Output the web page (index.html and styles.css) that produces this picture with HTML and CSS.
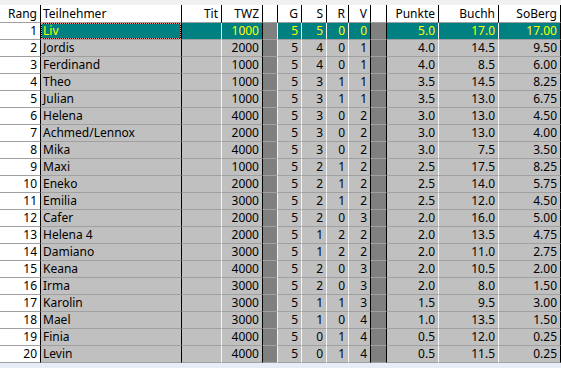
FILE: index.html
```html
<!DOCTYPE html>
<html>
<head>
<meta charset="utf-8">
<link rel="stylesheet" href="styles.css">
</head>
<body>
<div class="top"></div>
<div class="grid">
  <div class="row head">
    <div class="cell bk">Rang</div><div class="cell bk name">Teilnehmer</div><div class="cell bk">Tit</div><div class="cell bk">TWZ</div><div class="cell bk"></div><div class="cell bk">G</div><div class="cell bk">S</div><div class="cell bk">R</div><div class="cell bk">V</div><div class="cell bk"></div><div class="cell bk">Punkte</div><div class="cell bk">Buchh</div><div class="cell bk">SoBerg</div>
  </div>
  <div class="row sel">
    <div class="cell rank bk">1</div><div class="cell name bk"><span class="focus">Liv</span></div><div class="cell"></div><div class="cell bk">1000</div><div class="cell dark"></div><div class="cell">5</div><div class="cell">5</div><div class="cell">0</div><div class="cell bk">0</div><div class="cell dark bk"></div><div class="cell">5.0</div><div class="cell">17.0</div><div class="cell bk">17.00</div>
  </div>
  <div class="row">
    <div class="cell rank bk">2</div><div class="cell name bk">Jordis</div><div class="cell"></div><div class="cell bk">2000</div><div class="cell dark"></div><div class="cell">5</div><div class="cell">4</div><div class="cell">0</div><div class="cell bk">1</div><div class="cell dark bk"></div><div class="cell">4.0</div><div class="cell">14.5</div><div class="cell bk">9.50</div>
  </div>
  <div class="row">
    <div class="cell rank bk">3</div><div class="cell name bk">Ferdinand</div><div class="cell"></div><div class="cell bk">1000</div><div class="cell dark"></div><div class="cell">5</div><div class="cell">4</div><div class="cell">0</div><div class="cell bk">1</div><div class="cell dark bk"></div><div class="cell">4.0</div><div class="cell">8.5</div><div class="cell bk">6.00</div>
  </div>
  <div class="row">
    <div class="cell rank bk">4</div><div class="cell name bk">Theo</div><div class="cell"></div><div class="cell bk">1000</div><div class="cell dark"></div><div class="cell">5</div><div class="cell">3</div><div class="cell">1</div><div class="cell bk">1</div><div class="cell dark bk"></div><div class="cell">3.5</div><div class="cell">14.5</div><div class="cell bk">8.25</div>
  </div>
  <div class="row">
    <div class="cell rank bk">5</div><div class="cell name bk">Julian</div><div class="cell"></div><div class="cell bk">1000</div><div class="cell dark"></div><div class="cell">5</div><div class="cell">3</div><div class="cell">1</div><div class="cell bk">1</div><div class="cell dark bk"></div><div class="cell">3.5</div><div class="cell">13.0</div><div class="cell bk">6.75</div>
  </div>
  <div class="row">
    <div class="cell rank bk">6</div><div class="cell name bk">Helena</div><div class="cell"></div><div class="cell bk">4000</div><div class="cell dark"></div><div class="cell">5</div><div class="cell">3</div><div class="cell">0</div><div class="cell bk">2</div><div class="cell dark bk"></div><div class="cell">3.0</div><div class="cell">13.0</div><div class="cell bk">4.50</div>
  </div>
  <div class="row">
    <div class="cell rank bk">7</div><div class="cell name bk">Achmed/Lennox</div><div class="cell"></div><div class="cell bk">2000</div><div class="cell dark"></div><div class="cell">5</div><div class="cell">3</div><div class="cell">0</div><div class="cell bk">2</div><div class="cell dark bk"></div><div class="cell">3.0</div><div class="cell">13.0</div><div class="cell bk">4.00</div>
  </div>
  <div class="row">
    <div class="cell rank bk">8</div><div class="cell name bk">Mika</div><div class="cell"></div><div class="cell bk">4000</div><div class="cell dark"></div><div class="cell">5</div><div class="cell">3</div><div class="cell">0</div><div class="cell bk">2</div><div class="cell dark bk"></div><div class="cell">3.0</div><div class="cell">7.5</div><div class="cell bk">3.50</div>
  </div>
  <div class="row">
    <div class="cell rank bk">9</div><div class="cell name bk">Maxi</div><div class="cell"></div><div class="cell bk">1000</div><div class="cell dark"></div><div class="cell">5</div><div class="cell">2</div><div class="cell">1</div><div class="cell bk">2</div><div class="cell dark bk"></div><div class="cell">2.5</div><div class="cell">17.5</div><div class="cell bk">8.25</div>
  </div>
  <div class="row">
    <div class="cell rank bk">10</div><div class="cell name bk">Eneko</div><div class="cell"></div><div class="cell bk">2000</div><div class="cell dark"></div><div class="cell">5</div><div class="cell">2</div><div class="cell">1</div><div class="cell bk">2</div><div class="cell dark bk"></div><div class="cell">2.5</div><div class="cell">14.0</div><div class="cell bk">5.75</div>
  </div>
  <div class="row">
    <div class="cell rank bk">11</div><div class="cell name bk">Emilia</div><div class="cell"></div><div class="cell bk">3000</div><div class="cell dark"></div><div class="cell">5</div><div class="cell">2</div><div class="cell">1</div><div class="cell bk">2</div><div class="cell dark bk"></div><div class="cell">2.5</div><div class="cell">12.0</div><div class="cell bk">4.50</div>
  </div>
  <div class="row">
    <div class="cell rank bk">12</div><div class="cell name bk">Cafer</div><div class="cell"></div><div class="cell bk">2000</div><div class="cell dark"></div><div class="cell">5</div><div class="cell">2</div><div class="cell">0</div><div class="cell bk">3</div><div class="cell dark bk"></div><div class="cell">2.0</div><div class="cell">16.0</div><div class="cell bk">5.00</div>
  </div>
  <div class="row">
    <div class="cell rank bk">13</div><div class="cell name bk">Helena 4</div><div class="cell"></div><div class="cell bk">2000</div><div class="cell dark"></div><div class="cell">5</div><div class="cell">1</div><div class="cell">2</div><div class="cell bk">2</div><div class="cell dark bk"></div><div class="cell">2.0</div><div class="cell">13.5</div><div class="cell bk">4.75</div>
  </div>
  <div class="row">
    <div class="cell rank bk">14</div><div class="cell name bk">Damiano</div><div class="cell"></div><div class="cell bk">3000</div><div class="cell dark"></div><div class="cell">5</div><div class="cell">1</div><div class="cell">2</div><div class="cell bk">2</div><div class="cell dark bk"></div><div class="cell">2.0</div><div class="cell">11.0</div><div class="cell bk">2.75</div>
  </div>
  <div class="row">
    <div class="cell rank bk">15</div><div class="cell name bk">Keana</div><div class="cell"></div><div class="cell bk">4000</div><div class="cell dark"></div><div class="cell">5</div><div class="cell">2</div><div class="cell">0</div><div class="cell bk">3</div><div class="cell dark bk"></div><div class="cell">2.0</div><div class="cell">10.5</div><div class="cell bk">2.00</div>
  </div>
  <div class="row">
    <div class="cell rank bk">16</div><div class="cell name bk">Irma</div><div class="cell"></div><div class="cell bk">3000</div><div class="cell dark"></div><div class="cell">5</div><div class="cell">2</div><div class="cell">0</div><div class="cell bk">3</div><div class="cell dark bk"></div><div class="cell">2.0</div><div class="cell">8.0</div><div class="cell bk">1.50</div>
  </div>
  <div class="row">
    <div class="cell rank bk">17</div><div class="cell name bk">Karolin</div><div class="cell"></div><div class="cell bk">3000</div><div class="cell dark"></div><div class="cell">5</div><div class="cell">1</div><div class="cell">1</div><div class="cell bk">3</div><div class="cell dark bk"></div><div class="cell">1.5</div><div class="cell">9.5</div><div class="cell bk">3.00</div>
  </div>
  <div class="row">
    <div class="cell rank bk">18</div><div class="cell name bk">Mael</div><div class="cell"></div><div class="cell bk">3000</div><div class="cell dark"></div><div class="cell">5</div><div class="cell">1</div><div class="cell">0</div><div class="cell bk">4</div><div class="cell dark bk"></div><div class="cell">1.0</div><div class="cell">13.5</div><div class="cell bk">1.50</div>
  </div>
  <div class="row">
    <div class="cell rank bk">19</div><div class="cell name bk">Finia</div><div class="cell"></div><div class="cell bk">4000</div><div class="cell dark"></div><div class="cell">5</div><div class="cell">0</div><div class="cell">1</div><div class="cell bk">4</div><div class="cell dark bk"></div><div class="cell">0.5</div><div class="cell">12.0</div><div class="cell bk">0.25</div>
  </div>
  <div class="row">
    <div class="cell rank bk">20</div><div class="cell name bk">Levin</div><div class="cell"></div><div class="cell bk">4000</div><div class="cell dark"></div><div class="cell">5</div><div class="cell">0</div><div class="cell">1</div><div class="cell bk">4</div><div class="cell dark bk"></div><div class="cell">0.5</div><div class="cell">11.5</div><div class="cell bk">0.25</div>
  </div>
</div>
</body>
</html>
```
FILE: styles.css
```css
html, body {
  margin: 0;
  padding: 0;
}
body {
  width: 561px;
  height: 368px;
  overflow: hidden;
  background: #e6edf6;
  font-family: "Noto Sans", "Liberation Sans", Arial, sans-serif;
  font-size: 12px;
  color: #000;
}
.top {
  height: 5px;
  background: #f0f0f0;
}
.row {
  display: grid;
  grid-template-columns: 41px 141px 40px 41px 15px 24px 25px 22px 22px 16px 52px 60px 62px;
  height: 17px;
}
.cell {
  box-sizing: border-box;
  height: 17px;
  background: #c0c0c0;
  border-right: 1px solid #f4f4f4;
  border-bottom: 1px solid #a0a0a0;
  text-align: right;
  padding-right: 3px;
  line-height: 16px;
  white-space: nowrap;
  overflow: hidden;
}
.cell.bk {
  border-right-color: #000;
}
.cell.name {
  text-align: left;
  padding-left: 2px;
  padding-right: 0;
}
.cell.rank {
  background: #fff;
}
.cell.dark {
  background: #808080;
}
.head {
  height: 18px;
}
.head .cell {
  height: 18px;
  line-height: 17px;
  background: #fff;
  border-bottom-color: #a0a0a0;
}
.sel .cell {
  background: #008080;
  color: #ffff00;
}
.sel .cell.rank {
  background: #fff;
  color: #000;
}
.sel .cell.dark {
  background: #808080;
}
.sel .cell.name {
  padding: 0;
}
.focus {
  display: block;
  height: 16px;
  padding-left: 2px;
  box-shadow: inset 0 0 0 1px #000;
  outline: 1px dotted #ff8c8c;
  outline-offset: -1px;
}
```
